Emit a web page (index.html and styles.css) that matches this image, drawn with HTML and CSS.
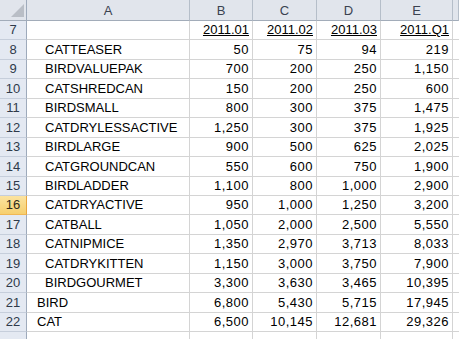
FILE: index.html
```html
<!DOCTYPE html>
<html>
<head>
<meta charset="utf-8">
<link rel="stylesheet" href="styles.css">
</head>
<body>
<div class="sheet">
  <div class="row hdr">
    <div class="c rh corner"><svg width="13" height="13" viewBox="0 0 13 13"><polygon points="13,0 13,13 0,13" fill="#b9bec6"/></svg></div>
    <div class="c a ch">A</div>
    <div class="c b ch">B</div>
    <div class="c cc ch">C</div>
    <div class="c d ch">D</div>
    <div class="c e ch">E</div>
    <div class="c f ch"></div>
  </div>
  <div class="row">
    <div class="c rh">7</div><div class="c a"></div>
    <div class="c b n u"><span>2011.01</span></div><div class="c cc n u"><span>2011.02</span></div><div class="c d n u"><span>2011.03</span></div><div class="c e n u"><span>2011.Q1</span></div><div class="c f"></div>
  </div>
  <div class="row">
    <div class="c rh">8</div><div class="c a l2">CATTEASER</div>
    <div class="c b n">50</div><div class="c cc n">75</div><div class="c d n">94</div><div class="c e n">219</div><div class="c f"></div>
  </div>
  <div class="row">
    <div class="c rh">9</div><div class="c a l2">BIRDVALUEPAK</div>
    <div class="c b n">700</div><div class="c cc n">200</div><div class="c d n">250</div><div class="c e n">1,150</div><div class="c f"></div>
  </div>
  <div class="row">
    <div class="c rh">10</div><div class="c a l2">CATSHREDCAN</div>
    <div class="c b n">150</div><div class="c cc n">200</div><div class="c d n">250</div><div class="c e n">600</div><div class="c f"></div>
  </div>
  <div class="row">
    <div class="c rh">11</div><div class="c a l2">BIRDSMALL</div>
    <div class="c b n">800</div><div class="c cc n">300</div><div class="c d n">375</div><div class="c e n">1,475</div><div class="c f"></div>
  </div>
  <div class="row">
    <div class="c rh">12</div><div class="c a l2">CATDRYLESSACTIVE</div>
    <div class="c b n">1,250</div><div class="c cc n">300</div><div class="c d n">375</div><div class="c e n">1,925</div><div class="c f"></div>
  </div>
  <div class="row">
    <div class="c rh">13</div><div class="c a l2">BIRDLARGE</div>
    <div class="c b n">900</div><div class="c cc n">500</div><div class="c d n">625</div><div class="c e n">2,025</div><div class="c f"></div>
  </div>
  <div class="row">
    <div class="c rh">14</div><div class="c a l2">CATGROUNDCAN</div>
    <div class="c b n">550</div><div class="c cc n">600</div><div class="c d n">750</div><div class="c e n">1,900</div><div class="c f"></div>
  </div>
  <div class="row">
    <div class="c rh">15</div><div class="c a l2">BIRDLADDER</div>
    <div class="c b n">1,100</div><div class="c cc n">800</div><div class="c d n">1,000</div><div class="c e n">2,900</div><div class="c f"></div>
  </div>
  <div class="row">
    <div class="c rh sel">16</div><div class="c a l2">CATDRYACTIVE</div>
    <div class="c b n">950</div><div class="c cc n">1,000</div><div class="c d n">1,250</div><div class="c e n">3,200</div><div class="c f"></div>
  </div>
  <div class="row">
    <div class="c rh">17</div><div class="c a l2">CATBALL</div>
    <div class="c b n">1,050</div><div class="c cc n">2,000</div><div class="c d n">2,500</div><div class="c e n">5,550</div><div class="c f"></div>
  </div>
  <div class="row">
    <div class="c rh">18</div><div class="c a l2">CATNIPMICE</div>
    <div class="c b n">1,350</div><div class="c cc n">2,970</div><div class="c d n">3,713</div><div class="c e n">8,033</div><div class="c f"></div>
  </div>
  <div class="row">
    <div class="c rh">19</div><div class="c a l2">CATDRYKITTEN</div>
    <div class="c b n">1,150</div><div class="c cc n">3,000</div><div class="c d n">3,750</div><div class="c e n">7,900</div><div class="c f"></div>
  </div>
  <div class="row">
    <div class="c rh">20</div><div class="c a l2">BIRDGOURMET</div>
    <div class="c b n">3,300</div><div class="c cc n">3,630</div><div class="c d n">3,465</div><div class="c e n">10,395</div><div class="c f"></div>
  </div>
  <div class="row">
    <div class="c rh">21</div><div class="c a l1">BIRD</div>
    <div class="c b n">6,800</div><div class="c cc n">5,430</div><div class="c d n">5,715</div><div class="c e n">17,945</div><div class="c f"></div>
  </div>
  <div class="row">
    <div class="c rh">22</div><div class="c a l1">CAT</div>
    <div class="c b n">6,500</div><div class="c cc n">10,145</div><div class="c d n">12,681</div><div class="c e n">29,326</div><div class="c f"></div>
  </div>
  <div class="row">
    <div class="c rh"></div><div class="c a"></div>
    <div class="c b"></div><div class="c cc"></div><div class="c d"></div><div class="c e"></div><div class="c f"></div>
  </div>
</div>
</body>
</html>
```
FILE: styles.css
```css
html, body {
  margin: 0;
  padding: 0;
  background: #ffffff;
}

.sheet {
  width: 459px;
  height: 339px;
  overflow: hidden;
  display: flex;
  flex-direction: column;
  font-family: "Liberation Sans", Arial, sans-serif;
  font-size: 13px;
  color: #000000;
}

.row {
  display: flex;
  flex: 0 0 19.4375px;
  height: 19.4375px;
}

.row.hdr {
  flex: 0 0 21px;
  height: 21px;
}

.c {
  box-sizing: border-box;
  border-right: 1px solid #d4d4d4;
  border-bottom: 1px solid #d4d4d4;
  display: flex;
  align-items: flex-end;
  padding-bottom: 2px;
  white-space: nowrap;
  overflow: hidden;
  line-height: 15px;
}

.rh { width: 27px; flex: 0 0 27px; }
.a  { width: 163px; flex: 0 0 163px; }
.b  { width: 63px; flex: 0 0 63px; }
.cc { width: 64px; flex: 0 0 64px; }
.d  { width: 64px; flex: 0 0 64px; }
.e  { width: 72px; flex: 0 0 72px; }
.f  { flex: 1 1 auto; border-right: none; }

.rh {
  background: #e4e9f2;
  border-right: 1px solid #9eaabb;
  border-bottom: 1px solid #c6cedb;
  justify-content: center;
  color: #2f3a4a;
}

.rh.sel {
  background: linear-gradient(#fbe3a0, #f6cf6f);
  border-right: 1px solid #e7a53e;
  border-bottom: 1px solid #f0b755;
  color: #2f2a1a;
}

.hdr .c {
  border-bottom: 1px solid #a2acb9;
  border-right: 1px solid #b5bec9;
  background: #e1e5ec;
  justify-content: center;
  align-items: center;
  padding-bottom: 0;
  color: #3a4250;
  font-size: 13px;
}

.hdr .corner {
  background: #e1e5ec;
  border-right: 1px solid #9eaabb;
  justify-content: flex-end;
  align-items: flex-end;
  padding: 0 2px 3px 0;
}

.hdr .corner svg {
  display: block;
}

.n {
  justify-content: flex-end;
  padding-right: 3px;
  letter-spacing: 0.5px;
}

.u span {
  text-decoration: underline;
  letter-spacing: 0;
}

.l1 { padding-left: 10px; }
.l2 { padding-left: 18px; }
```
